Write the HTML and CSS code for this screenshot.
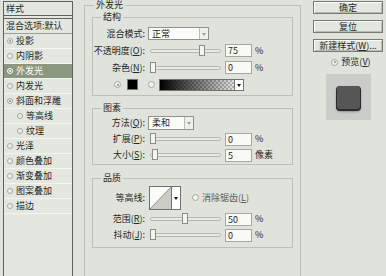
FILE: index.html
```html
<!DOCTYPE html>
<html lang="zh-CN">
<head>
  <meta charset="UTF-8">
  <title>图层样式</title>
  <link rel="stylesheet" href="styles.css">
</head>
<body>
  <div class="dialog">
    <div class="styles-panel">
      <div class="panel-head">样式</div>
      <ul class="style-list">
        <li class="blend">混合选项:默认</li>
        <li><span class="check on"></span>投影</li>
        <li><span class="check"></span>内阴影</li>
        <li class="active"><span class="check on"></span>外发光</li>
        <li><span class="check"></span>内发光</li>
        <li><span class="check on"></span>斜面和浮雕</li>
        <li class="sub"><span class="check"></span>等高线</li>
        <li class="sub"><span class="check"></span>纹理</li>
        <li><span class="check"></span>光泽</li>
        <li><span class="check"></span>颜色叠加</li>
        <li><span class="check"></span>渐变叠加</li>
        <li><span class="check"></span>图案叠加</li>
        <li><span class="check"></span>描边</li>
      </ul>
    </div>

    <fieldset class="group outer">
      <legend>外发光</legend>

      <fieldset class="group structure">
        <legend>结构</legend>
        <div class="row">
          <span class="lbl">混合模式:</span>
          <div class="select mode"><span>正常</span><i class="drop"></i></div>
        </div>
        <div class="row">
          <span class="lbl">不透明度(<u>O</u>):</span>
          <div class="slider"><span class="thumb" style="left:48px"></span></div>
          <div class="field">75</div><span class="unit">%</span>
        </div>
        <div class="row">
          <span class="lbl">杂色(<u>N</u>):</span>
          <div class="slider"><span class="thumb" style="left:-1px"></span></div>
          <div class="field">0</div><span class="unit">%</span>
        </div>
        <div class="row colors">
          <span class="radio on"></span>
          <span class="swatch"></span>
          <span class="radio"></span>
          <div class="gradient"><i class="drop dark"></i></div>
        </div>
      </fieldset>

      <fieldset class="group elements">
        <legend>图素</legend>
        <div class="row">
          <span class="lbl">方法(<u>Q</u>):</span>
          <div class="select method"><span>柔和</span><i class="drop"></i></div>
        </div>
        <div class="row">
          <span class="lbl">扩展(<u>P</u>):</span>
          <div class="slider"><span class="thumb" style="left:-1px"></span></div>
          <div class="field">0</div><span class="unit">%</span>
        </div>
        <div class="row">
          <span class="lbl">大小(<u>S</u>):</span>
          <div class="slider"><span class="thumb" style="left:1px"></span></div>
          <div class="field">5</div><span class="unit">像素</span>
        </div>
      </fieldset>

      <fieldset class="group quality">
        <legend>品质</legend>
        <div class="row contour-row">
          <span class="lbl">等高线:</span>
          <div class="contour">
            <svg width="21" height="22" viewBox="0 0 21 22">
              <rect width="21" height="22" fill="#fbfcf9"/>
              <polygon points="0,22 21,0 21,22" fill="#c9cdc4"/>
              <line x1="0" y1="22" x2="21" y2="0" stroke="#8d9289" stroke-width="1"/>
            </svg>
            <i class="drop dark"></i>
          </div>
          <span class="radio"></span>
          <span class="muted">消除锯齿(<u>L</u>)</span>
        </div>
        <div class="row">
          <span class="lbl">范围(<u>R</u>):</span>
          <div class="slider"><span class="thumb" style="left:31px"></span></div>
          <div class="field">50</div><span class="unit">%</span>
        </div>
        <div class="row">
          <span class="lbl">抖动(<u>J</u>):</span>
          <div class="slider"><span class="thumb" style="left:-1px"></span></div>
          <div class="field">0</div><span class="unit">%</span>
        </div>
      </fieldset>
    </fieldset>

    <div class="actions">
      <button type="button">确定</button>
      <button type="button">复位</button>
      <button type="button">新建样式(<u>W</u>)...</button>
      <div class="preview-toggle"><span class="radio on"></span>预览(<u>V</u>)</div>
      <div class="preview"><div class="shape"></div></div>
    </div>
  </div>
</body>
</html>
```

FILE: styles.css
```css
/* dialog base */
body {
  margin: 0;
  background-color: #dfe3dc;
  color: #262825;
  font-family: "Noto Sans CJK SC", sans-serif;
  font-size: 9px;
  line-height: 10px;
}

u {
  text-decoration: underline;
}

.dialog {
  display: flex;
  align-items: flex-start;
  height: 276px;
  overflow: hidden;
  padding: 1px 0 0 3px;
  box-sizing: border-box;
}

/* left style list */
.styles-panel {
  flex: none;
  width: 70px;
  height: 290px;
  box-sizing: border-box;
  border: 1px solid #5d625b;
  background-color: #e3e7e0;
  margin-right: 11px;
}

.panel-head {
  height: 13px;
  line-height: 14px;
  padding-left: 2px;
  border-bottom: 1px solid #5d625b;
}

.style-list {
  list-style: none;
  margin: 2px 0 0;
  padding: 0;
  border-top: 1px solid #5d625b;
}

.style-list li {
  display: flex;
  align-items: center;
  height: 14px;
  padding-left: 3px;
  border-bottom: 1px solid #f3f5f0;
}

.style-list .blend {
  padding-left: 2px;
  border-bottom-color: #9aa096;
}

.style-list .sub {
  padding-left: 13px;
}

.style-list .active {
  background-color: #8b977f;
  color: #fff;
}

.check {
  position: relative;
  width: 6px;
  height: 6px;
  box-sizing: border-box;
  margin-right: 3px;
  border: 1px solid #a3a89f;
  border-radius: 50%;
  background-color: #eef0eb;
}

.check.on::after {
  content: "";
  position: absolute;
  left: 1px;
  top: 1px;
  width: 2px;
  height: 2px;
  border-radius: 50%;
  background-color: #8f948b;
}

.active .check {
  border-color: #fff;
  background-color: transparent;
}

.active .check.on::after {
  background-color: #fff;
}

/* fieldsets */
.group {
  margin: 0;
  padding: 0;
  border: 1px solid #bcc1b8;
  min-width: 0;
}

.group legend {
  padding: 0 2px;
  margin-left: 8px;
  line-height: 10px;
}

.outer {
  flex: none;
  width: 217px;
  height: 300px;
  box-sizing: border-box;
  margin-top: -1px;
  padding: 0 7px;
}

.outer > legend {
  margin-left: 2px;
}

.structure {
  margin-top: 2px;
  padding: 3px 0 2px;
}

.elements {
  margin-top: 7px;
  padding: 2px 0 1px;
}

.quality {
  margin-top: 8px;
  padding: 1px 0 4px;
}

.row {
  display: flex;
  align-items: center;
  height: 17px;
}

.elements .row,
.quality .row {
  height: 16px;
}

.quality .contour-row {
  height: 27px;
}

.lbl {
  flex: none;
  width: 52px;
  margin-right: 3px;
  text-align: right;
  white-space: nowrap;
}

/* controls */
.select {
  display: flex;
  height: 13px;
  box-sizing: border-box;
  border: 1px solid #8e948b;
  background-color: #fbfcf9;
}

.select span {
  flex: 1;
  padding-left: 3px;
  line-height: 11px;
}

.select.mode {
  width: 61px;
}

.select.method {
  width: 46px;
  height: 14px;
}

.drop {
  position: relative;
  width: 8px;
  border-left: 1px solid #b9beb5;
  background-color: #eef0eb;
}

.drop::after {
  content: "";
  position: absolute;
  left: 2px;
  top: 50%;
  margin-top: -1px;
  border-left: 2px solid transparent;
  border-right: 2px solid transparent;
  border-top: 3px solid #9ba096;
}

.drop.dark {
  background-color: #fff;
  border-left-color: #6f746c;
}

.drop.dark::after {
  border-top-color: #111;
}

.slider {
  position: relative;
  flex: none;
  width: 71px;
  height: 4px;
  box-sizing: border-box;
  margin-left: 2px;
  border: 1px solid #b4b9b0;
  border-radius: 2px;
  background-color: #e9ece6;
}

.thumb {
  position: absolute;
  top: -5px;
  width: 6px;
  height: 11px;
  box-sizing: border-box;
  border: 1px solid #8a8f86;
  background-color: #f3f5f0;
}

.field {
  flex: none;
  width: 27px;
  height: 13px;
  box-sizing: border-box;
  margin-left: 4px;
  padding-left: 2px;
  border: 1px solid #a4a9a0;
  background-color: #f9faf6;
  line-height: 11px;
}

.unit {
  margin-left: 3px;
}

.radio {
  position: relative;
  flex: none;
  width: 7px;
  height: 7px;
  box-sizing: border-box;
  border: 1px solid #a3a89f;
  border-radius: 50%;
  background-color: #eef0eb;
}

.radio.on::after {
  content: "";
  position: absolute;
  left: 1.5px;
  top: 1.5px;
  width: 2px;
  height: 2px;
  border-radius: 50%;
  background-color: #8a8f86;
}

.colors .radio:first-child {
  margin-left: 21px;
}

.swatch {
  width: 11px;
  height: 11px;
  margin: 0 10px 0 6px;
  box-sizing: border-box;
  border: 1px solid #6f746c;
  background-color: #000;
}

.gradient {
  display: flex;
  justify-content: flex-end;
  width: 85px;
  height: 12px;
  box-sizing: border-box;
  margin-left: 4px;
  border: 1px solid #6f746c;
  background:
    linear-gradient(to right, #000, rgba(0, 0, 0, 0)),
    repeating-conic-gradient(#c8c8c8 0 25%, #fff 0 50%) 0 0 / 4px 4px;
}

.contour {
  display: flex;
  height: 24px;
  box-sizing: border-box;
  margin-left: 1px;
  border: 1px solid #6f746c;
}

.contour svg {
  display: block;
}

.contour-row .radio {
  margin-left: 11px;
}

.muted {
  margin-left: 3px;
  color: #5a5d57;
}

/* right column */
.actions {
  flex: none;
  display: flex;
  flex-direction: column;
  align-items: center;
  width: 70px;
  margin-left: 12px;
}

.actions button {
  width: 70px;
  height: 13px;
  margin: 0 0 6px;
  padding: 0;
  border: 1px solid #767b73;
  box-shadow: inset 1px 1px 0 #fbfcf9, inset -1px -1px 0 #b8bdb4;
  background-color: #e3e7e0;
  color: #262825;
  font: inherit;
  line-height: 10px;
}

.preview-toggle {
  display: flex;
  align-items: center;
  margin-top: -2px;
  height: 12px;
  padding-left: 6px;
}

.preview-toggle .radio {
  margin-right: 3px;
}

.preview {
  display: flex;
  align-items: center;
  justify-content: center;
  width: 45px;
  height: 46px;
  margin-top: 6px;
  background-color: #cbcdc8;
}

.shape {
  width: 23px;
  height: 23px;
  border-radius: 3px;
  background-color: #565656;
  box-shadow: 0 1px 0 1px #2c2c2c, 0 2px 3px rgba(0, 0, 0, 0.6);
}
```
